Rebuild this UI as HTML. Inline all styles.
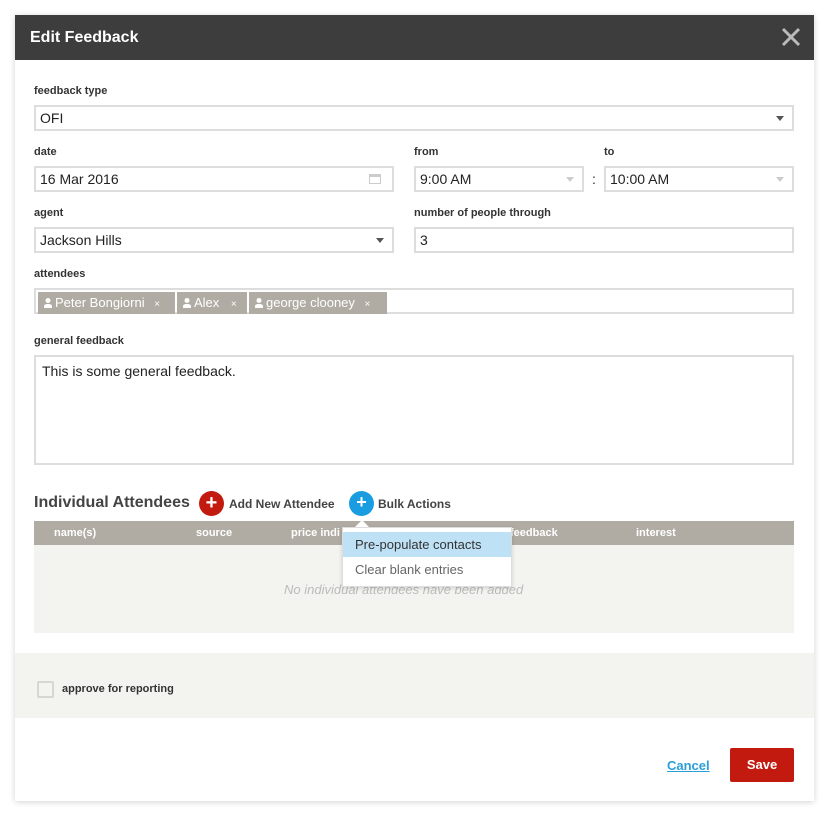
<!DOCTYPE html>
<html><head><style>
*{box-sizing:border-box;margin:0;padding:0}
body{width:829px;height:816px;background:#fff;font-family:"Liberation Sans",sans-serif;position:relative;overflow:hidden;color:#222}
.m{position:absolute;left:15px;top:15px;width:799px;height:786px;background:#fff;box-shadow:0 1px 6px rgba(0,0,0,.18)}
.a{position:absolute}
.hd{left:15px;top:15px;width:799px;height:45px;background:#3d3d3d;color:#fff;font-weight:bold;font-size:16px;padding:14px 0 0 15px}
.lb{font-size:11px;font-weight:bold;color:#333}
.in{border:2px solid #ddd;background:#fff;height:26px;font-size:14px;padding:3px 0 0 4px;color:#222}
.ar{position:absolute;right:8px;top:9px;width:0;height:0;border-left:4px solid transparent;border-right:4px solid transparent;border-top:5px solid #555}
.ar2{position:absolute;right:8px;top:9px;width:0;height:0;border-left:4px solid transparent;border-right:4px solid transparent;border-top:5px solid #ccc}
.tag{position:absolute;top:2px;height:22px;background:#b1aca3;color:#fff;font-size:13px;padding:3px 0 0 6px}
.tag svg{vertical-align:-1px;margin-right:3px}
.th{font-size:11px;font-weight:bold;color:#fff;top:527px}
</style></head><body>
<div class="m"></div>
<div class="a hd">Edit Feedback</div>
<svg class="a" style="left:781px;top:27px" width="20" height="20"><path d="M2 2L18 18M18 2L2 18" stroke="#bbb" stroke-width="3"/></svg>

<div class="a lb" style="left:34px;top:85px">feedback type</div>
<div class="a in" style="left:34px;top:105px;width:760px">OFI<div class="ar"></div></div>

<div class="a lb" style="left:34px;top:146px">date</div>
<div class="a in" style="left:34px;top:166px;width:360px">16 Mar 2016<div class="a" style="right:11px;top:6px;width:12px;height:10px;border:1px solid #ccc;border-top:3px solid #ccc"></div></div>
<div class="a lb" style="left:414px;top:146px">from</div>
<div class="a in" style="left:414px;top:166px;width:170px">9:00 AM<div class="ar2"></div></div>
<div class="a" style="left:592px;top:171px;font-size:14px">:</div>
<div class="a lb" style="left:604px;top:146px">to</div>
<div class="a in" style="left:604px;top:166px;width:190px">10:00 AM<div class="ar2"></div></div>

<div class="a lb" style="left:34px;top:207px">agent</div>
<div class="a in" style="left:34px;top:227px;width:360px">Jackson Hills<div class="ar"></div></div>
<div class="a lb" style="left:414px;top:207px">number of people through</div>
<div class="a in" style="left:414px;top:227px;width:380px">3</div>

<div class="a lb" style="left:34px;top:268px">attendees</div>
<div class="a in" style="left:34px;top:288px;width:760px;padding:0">
<div class="tag" style="left:2px;width:137px"><svg width="8" height="10"><circle cx="4" cy="2.5" r="2.5" fill="#fff"/><path d="M0 10V8Q0 6 4 6Q8 6 8 8V10Z" fill="#fff"/></svg>Peter Bongiorni <span style="font-size:10px;margin-left:6px">×</span></div>
<div class="tag" style="left:141px;width:70px"><svg width="8" height="10"><circle cx="4" cy="2.5" r="2.5" fill="#fff"/><path d="M0 10V8Q0 6 4 6Q8 6 8 8V10Z" fill="#fff"/></svg>Alex <span style="font-size:10px;margin-left:8px">×</span></div>
<div class="tag" style="left:213px;width:138px"><svg width="8" height="10"><circle cx="4" cy="2.5" r="2.5" fill="#fff"/><path d="M0 10V8Q0 6 4 6Q8 6 8 8V10Z" fill="#fff"/></svg>george clooney <span style="font-size:10px;margin-left:6px">×</span></div>
</div>

<div class="a lb" style="left:34px;top:335px">general feedback</div>
<div class="a in" style="left:34px;top:355px;width:760px;height:110px;padding:6px 0 0 6px">This is some general feedback.</div>

<div class="a" style="left:34px;top:494px;font-size:16px;font-weight:bold;color:#444">Individual Attendees</div>
<div class="a" style="left:199px;top:491px;width:25px;height:25px;border-radius:50%;background:#c21a0f;color:#fff;text-align:center;font-weight:bold;font-size:20px;line-height:24px">+</div>
<div class="a" style="left:229px;top:497px;font-size:12px;font-weight:bold;color:#444">Add New Attendee</div>
<div class="a" style="left:349px;top:491px;width:25px;height:25px;border-radius:50%;background:#1a9de0;color:#fff;text-align:center;font-weight:bold;font-size:18px;line-height:23px">+</div>
<div class="a" style="left:378px;top:497px;font-size:12px;font-weight:bold;color:#444">Bulk Actions</div>

<div class="a" style="left:34px;top:521px;width:760px;height:24px;background:#b1aca3"></div>
<div class="a th" style="left:54px">name(s)</div>
<div class="a th" style="left:196px">source</div>
<div class="a th" style="left:291px">price indi</div>
<div class="a th" style="left:510px">feedback</div>
<div class="a th" style="left:636px">interest</div>
<div class="a" style="left:34px;top:545px;width:760px;height:88px;background:#f3f3ef"></div>
<div class="a" style="left:284px;top:582px;font-size:13px;font-style:italic;color:#bbb">No individual attendees have been added</div>

<div class="a" style="left:342px;top:527px;width:170px;height:60px;background:#fff;border:1px solid #ddd;box-shadow:0 1px 4px rgba(0,0,0,.15)">
<div style="background:#bfe1f6;height:25px;margin-top:4px;font-size:13px;padding:5px 0 0 12px;color:#333">Pre-populate contacts</div>
<div style="font-size:13px;padding:5px 0 0 12px;color:#666">Clear blank entries</div>
</div>
<div class="a" style="left:355px;top:520px;width:0;height:0;border-left:7px solid transparent;border-right:7px solid transparent;border-bottom:7px solid #fff"></div>

<div class="a" style="left:15px;top:653px;width:799px;height:65px;background:#f3f3ef"></div>
<div class="a" style="left:37px;top:681px;width:17px;height:17px;border:2px solid #d6d6d2;border-radius:2px;background:#f3f3ef"></div>
<div class="a" style="left:62px;top:683px;font-size:11px;font-weight:bold;color:#333">approve for reporting</div>

<div class="a" style="left:667px;top:758px;font-size:13px;font-weight:bold;color:#2a9fd8;text-decoration:underline">Cancel</div>
<div class="a" style="left:730px;top:748px;width:64px;height:34px;background:#c21a0f;border-radius:2px;color:#fff;font-weight:bold;font-size:13px;text-align:center;line-height:34px">Save</div>
</body></html>
